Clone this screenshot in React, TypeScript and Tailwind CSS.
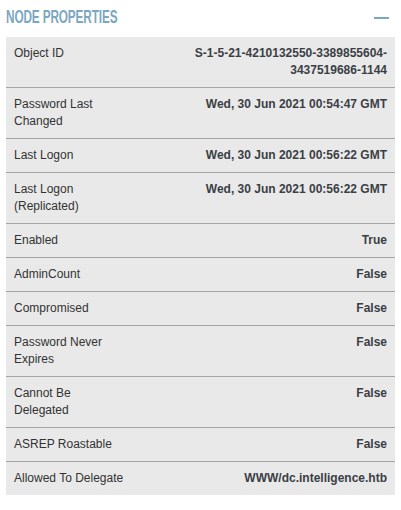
import React from "react";

const rows: { label: string; value: string }[] = [
  { label: "Object ID", value: "S-1-5-21-4210132550-3389855604-3437519686-1144" },
  { label: "Password Last Changed", value: "Wed, 30 Jun 2021 00:54:47 GMT" },
  { label: "Last Logon", value: "Wed, 30 Jun 2021 00:56:22 GMT" },
  { label: "Last Logon (Replicated)", value: "Wed, 30 Jun 2021 00:56:22 GMT" },
  { label: "Enabled", value: "True" },
  { label: "AdminCount", value: "False" },
  { label: "Compromised", value: "False" },
  { label: "Password Never Expires", value: "False" },
  { label: "Cannot Be Delegated", value: "False" },
  { label: "ASREP Roastable", value: "False" },
  { label: "Allowed To Delegate", value: "WWW/dc.intelligence.htb" },
];

export default function App() {
  return (
    <div className="w-[401px] h-[510px] bg-white font-['Liberation_Sans',Arial,sans-serif]">
      <div className="h-[37px] flex items-center justify-between pl-[6px] pr-[12px] pb-[4px]">
        <span className="inline-block origin-left scale-x-[0.62] font-['Liberation_Sans',sans-serif] font-bold text-[19px] leading-none text-[#7ba7c1] tracking-[-0.2px] whitespace-nowrap">
          NODE PROPERTIES
        </span>
        <span className="block w-[15px] h-[2px] bg-[#7ba7c1] mt-[2px]" />
      </div>
      <div className="mx-[6px] bg-[#e9e9e9]">
        {rows.map((r, i) => (
          <div
            key={r.label}
            className={
              "flex px-[8px] py-[8px] text-[12px] leading-[17px] " +
              (i < rows.length - 1 ? "border-b border-[#a5a5a5]" : "")
            }
          >
            <div className="w-[113px] shrink-0 text-[#333333]">{r.label}</div>
            <div className="flex-1 ml-[8px] text-right font-bold text-[#3b3f45]">{r.value}</div>
          </div>
        ))}
      </div>
    </div>
  );
}
